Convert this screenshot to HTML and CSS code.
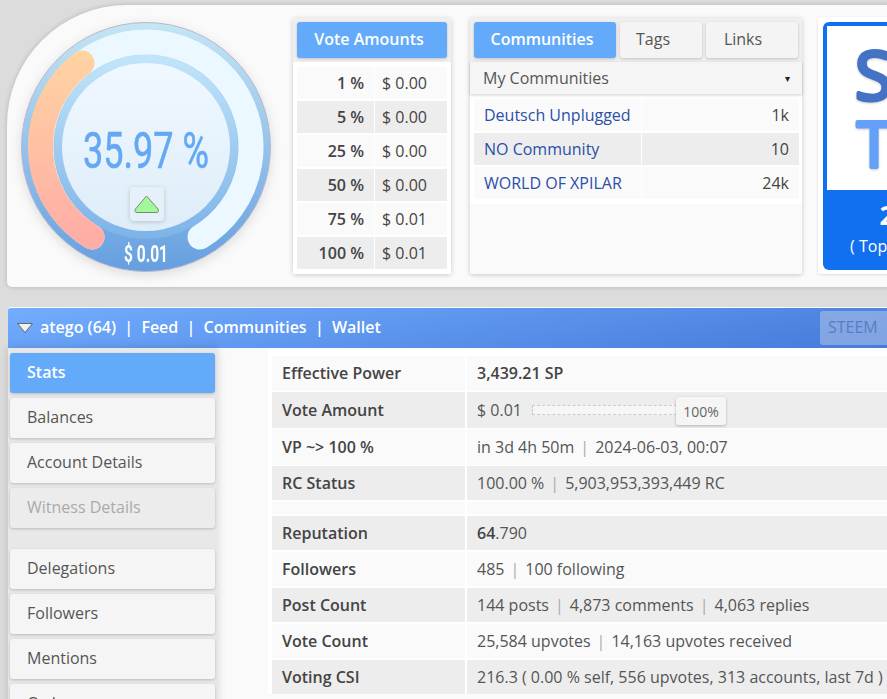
FILE: index.html
```html
<!DOCTYPE html>
<html lang="en">
<head>
<meta charset="utf-8">
<title>Account stats</title>
<link rel="stylesheet" href="styles.css">
</head>
<body>
<div class="page">
  <section class="top">
    <div class="gauge">
      <svg width="250" height="250" viewBox="0 0 250 250">
        <defs>
          <linearGradient id="ring" x1="0" y1="0" x2="0" y2="1">
            <stop offset="0" stop-color="#c4e6f4"/>
            <stop offset="1" stop-color="#659fe0"/>
          </linearGradient>
          <linearGradient id="ring2" x1="0" y1="0" x2="0" y2="1">
            <stop offset="0" stop-color="#c2e5fa"/>
            <stop offset="1" stop-color="#7db3e8"/>
          </linearGradient>
          <linearGradient id="inner" x1="0" y1="0" x2="0" y2="1">
            <stop offset="0" stop-color="#f0f8ff"/>
            <stop offset="1" stop-color="#deedf9"/>
          </linearGradient>
          <linearGradient id="mana" gradientUnits="userSpaceOnUse" x1="0" y1="28" x2="0" y2="228">
            <stop offset="0" stop-color="#ffd4a2"/>
            <stop offset="1" stop-color="#ffaba6"/>
          </linearGradient>
        </defs>
        <circle cx="125" cy="125" r="124.5" fill="url(#ring)" stroke="#b9b6cc" stroke-width="1"/>
        <path class="track" d="M71 215 A105 105 0 1 1 179 215"/>
        <path class="mana" d="M61 41 A105 105 0 0 0 71 215"/>
        <circle cx="125" cy="125" r="92" fill="url(#ring2)"/>
        <circle cx="125" cy="125" r="84" fill="url(#inner)"/>
        <text class="pct" x="62" y="146" textLength="126" lengthAdjust="spacingAndGlyphs">35.97 %</text>
        <text class="usd" x="103" y="240" textLength="44" lengthAdjust="spacingAndGlyphs">$ 0.01</text>
        <rect class="arrow-box" x="109" y="165" width="34" height="34" rx="4"/>
        <path class="arrow" d="M125.5 174 L137 187 Q138.500 190.500 135 190.500 L116 190.500 Q113 190.500 114.500 187 Z"/>
      </svg>
    </div>

    <div class="card votes">
      <div class="card-head"><span class="tab tab-on tab-wide">Vote Amounts</span></div>
      <div class="card-body">
        <div class="vote-grid">
          <div class="vc vr b">1 %</div><div class="vc">$ 0.00</div>
          <div class="vc vr b alt">5 %</div><div class="vc alt">$ 0.00</div>
          <div class="vc vr b">25 %</div><div class="vc">$ 0.00</div>
          <div class="vc vr b alt">50 %</div><div class="vc alt">$ 0.00</div>
          <div class="vc vr b">75 %</div><div class="vc">$ 0.01</div>
          <div class="vc vr b alt">100 %</div><div class="vc alt">$ 0.01</div>
        </div>
      </div>
    </div>

    <div class="card comm">
      <div class="card-head tabs">
        <span class="tab tab-on t-comm">Communities</span>
        <span class="tab t-tags">Tags</span>
        <span class="tab t-links">Links</span>
      </div>
      <div class="select"><span>My Communities</span><span class="caret">▾</span></div>
      <div class="comm-body">
        <div class="comm-grid">
          <div class="vc link">Deutsch Unplugged</div><div class="vc right">1k</div>
          <div class="vc link alt">NO Community</div><div class="vc right alt">10</div>
          <div class="vc link">WORLD OF XPILAR</div><div class="vc right">24k</div>
        </div>
      </div>
    </div>

    <div class="rank">
      <div class="rank-in">
        <div class="rank-logo">
          <svg width="132" height="164" viewBox="0 0 132 164">
            <text class="l-s" x="28" y="74">S</text>
            <text class="l-t" x="30" y="141">T</text>
          </svg>
        </div>
        <div class="rank-foot">
          <div class="rank-num">23</div>
          <div class="rank-sub">( Top 10 % )</div>
        </div>
      </div>
    </div>
  </section>

  <section class="account">
    <header class="bar">
      <svg class="tri" width="16" height="10" viewBox="0 0 16 10"><path d="M.5 .5 H15.500 L8 9.500 Z"/></svg>
      <nav class="bar-nav"><b>atego (64)</b><i>|</i><b>Feed</b><i>|</i><b>Communities</b><i>|</i><b>Wallet</b></nav>
      <span class="steem">STEEM</span>
    </header>
    <div class="body">
      <aside class="side">
        <a class="nav on">Stats</a>
        <a class="nav">Balances</a>
        <a class="nav">Account Details</a>
        <a class="nav off">Witness Details</a>
        <a class="nav gap">Delegations</a>
        <a class="nav">Followers</a>
        <a class="nav">Mentions</a>
        <a class="nav">Orders</a>
      </aside>
      <main class="main">
        <div class="stats">
          <div class="row h35"><div class="k">Effective Power</div><div class="v"><strong>3,439.21 SP</strong></div></div>
          <div class="row h36 alt"><div class="k">Vote Amount</div><div class="v">$ 0.01<span class="meter"><span class="meter-tip">100%</span></span></div></div>
          <div class="row h36"><div class="k">VP ~&gt; 100 %</div><div class="v">in 3d 4h 50m<i>|</i>2024-06-03, 00:07</div></div>
          <div class="row alt"><div class="k">RC Status</div><div class="v">100.00 %<i>|</i>5,903,953,393,449 RC</div></div>
          <div class="row spacer"><div class="k"></div><div class="v"></div></div>
          <div class="row alt"><div class="k">Reputation</div><div class="v"><strong>64</strong>.790</div></div>
          <div class="row"><div class="k">Followers</div><div class="v">485<i>|</i>100 following</div></div>
          <div class="row alt"><div class="k">Post Count</div><div class="v">144 posts<i>|</i>4,873 comments<i>|</i>4,063 replies</div></div>
          <div class="row"><div class="k">Vote Count</div><div class="v">25,584 upvotes<i>|</i>14,163 upvotes received</div></div>
          <div class="row alt"><div class="k">Voting CSI</div><div class="v">216.3 ( 0.00 % self, 556 upvotes, 313 accounts, last 7d )</div></div>
        </div>
      </main>
    </div>
  </section>
</div>
</body>
</html>
```
FILE: styles.css
```css
* { box-sizing: border-box; }
html, body { margin: 0; height: 100%; overflow: hidden; }
body { background: #dcdcdc; font-family: "Open Sans", "Liberation Sans", sans-serif; font-size: 16px; color: #444; }
.page { width: 1200px; padding: 5px 0 0 7px; }

.top { display: flex; align-items: flex-start; height: 282px; padding: 13px 0 0 14px; background: #fafafa; border-radius: 120px 0 0 5px; box-shadow: 0 0 5px rgba(0,0,0,.18); }
.gauge { width: 250px; height: 250px; margin-top: 4px; filter: drop-shadow(0 3px 6px rgba(0,0,0,.12)); }
.gauge svg { display: block; }
.track, .mana { fill: none; stroke-width: 25; stroke-linecap: round; }
.track { stroke: #ecf8ff; }
.mana { stroke: url(#mana); }
.pct { font-family: "Roboto", sans-serif; font-weight: 400; font-size: 50px; fill: #64a8f4; stroke: #64a8f4; stroke-width: .6; }
.usd { font-family: "Roboto", sans-serif; font-weight: 700; font-size: 24px; fill: #fff; }
.arrow-box { fill: #e6f0f8; filter: drop-shadow(0 1px 2px rgba(0,0,0,.18)); }
.arrow { fill: #a4f79a; stroke: #6f8f6f; stroke-width: 1; stroke-linejoin: round; }

.card { height: 256px; background: #fafafa; box-shadow: 0 1px 5px rgba(0,0,0,.2); border-radius: 2px; }
.votes { width: 158px; margin-left: 22px; }
.comm { width: 332px; margin-left: 19px; }
.card-head { height: 44px; padding: 4px; background: #efefef; display: flex; gap: 4px; }
.tab { display: flex; align-items: center; justify-content: center; height: 36px; padding-bottom: 2px; border-radius: 3px; background: #f4f4f4; box-shadow: 0 1px 3px rgba(0,0,0,.2); color: #555; }
.tab-on { background: #64aafa; color: #fff; font-weight: 600; padding-right: 6px; }
.tab-wide { width: 150px; }
.t-comm { width: 142px; }
.t-tags { width: 82px; padding-right: 16px; }
.t-links { width: 92px; padding-right: 18px; }
.card-body { height: 212px; padding: 5px 4px; background: #fff; }
.vote-grid { display: grid; grid-template-columns: 77px 72px; grid-auto-rows: 32px; gap: 2px 1px; }
.vc { display: flex; align-items: center; padding: 0 7px; background: #fafafa; color: #444; }
.alt { background: #ededed; }
.vr { justify-content: flex-end; padding-right: 10px; }
.b { font-weight: 600; }
.select { display: flex; justify-content: space-between; align-items: center; height: 32px; padding: 0 12px 0 13px; background: #f5f5f5; box-shadow: 0 1px 3px rgba(0,0,0,.2); position: relative; color: #555; }
.caret { font-size: 10px; color: #222; }
.comm-body { height: 110px; padding: 5px 4px 4px; background: #fff; }
.comm-grid { display: grid; grid-template-columns: 167px 157px; grid-auto-rows: 32px; gap: 2px 1px; }
.link { color: #2a4fa8; padding-left: 10px; }
.right { justify-content: flex-end; padding-right: 10px; }

.rank { width: 150px; height: 257px; margin: -1px 0 0 16px; padding: 5px; background: #fff; border-radius: 3px; box-shadow: 0 1px 3px rgba(0,0,0,.12); }
.rank-in { height: 248px; background: #1170ef; border-radius: 6px; padding: 4px 4px 0; display: flex; flex-direction: column; }
.rank-logo { height: 164px; background: #fff; }
.rank-logo svg { display: block; }
.l-s, .l-t { font-family: "Open Sans", sans-serif; font-weight: 400; stroke-width: 4; stroke-linejoin: round; paint-order: stroke; filter: drop-shadow(0 1px 1px rgba(0,0,0,.2)); }
.l-s { font-size: 68px; fill: #4472c4; stroke: #4472c4; }
.l-t { font-size: 62px; fill: #64a0f8; stroke: #64a0f8; }
.rank-foot { flex: 1; color: #fff; text-align: center; }
.rank-num { font-size: 27px; font-weight: 700; line-height: 30px; margin-top: 10px; padding-left: 4px; }
.rank-sub { font-size: 16px; line-height: 24px; margin-top: 4px; }

.account { margin: 20px 0 0 1px; }
.bar { display: flex; align-items: center; height: 41px; padding: 0 0 0 9px; background: linear-gradient(170deg, #72adff 0%, #4f86e2 60%, #3a70d2 100%); border-top: 1px solid #fff; border-radius: 3px 0 0 0; color: #fff; }
.tri { margin-right: 7px; flex: none; }
.tri path { fill: #f0f0f0; stroke: #666; stroke-width: 1; stroke-linejoin: round; }
.bar-nav { display: flex; align-items: center; flex: 0 0 780px; padding-bottom: 2px; font-weight: 600; }
.bar-nav b { font-weight: 600; }
.bar-nav i { font-style: normal; font-weight: 600; margin: 0 8.250px; }
.steem { width: 90px; height: 34px; padding-left: 8px; line-height: 32px; background: rgba(235,235,235,.35); border-radius: 3px; color: #5a7cc2; }
.body { display: flex; height: 360px; }
.side { width: 210px; padding: 5px 3px 0 2px; background: #e8e8e8; display: flex; flex-direction: column; gap: 5px; box-shadow: 0 0 8px rgba(0,0,0,.14); position: relative; flex: none; }
.nav { display: flex; align-items: center; flex: none; height: 40px; padding: 0 0 2px 17px; border-radius: 3px; background: #f5f5f5; box-shadow: 0 1px 3px rgba(0,0,0,.2); color: #555; }
.nav.on { background: #64aafa; color: #fff; font-weight: 600; }
.nav.off { background: #ececec; color: #aaa; }
.nav.gap { margin-top: 16px; }
.main { flex: 1; padding: 0 0 0 50px; background: #fafafa; }
.stats { background: #fff; padding: 8px 0 0 4px; }
.row { display: grid; grid-template-columns: 193px 1fr; column-gap: 2px; height: 34px; margin-bottom: 2px; background: #fff; }
.row.h35 { height: 35px; margin-bottom: 1px; }
.row.h35 .k, .row.h35 .v { padding-bottom: 1px; }
.row.h36 { height: 36px; margin-bottom: 1px; }
.row.spacer { height: 12px; margin-bottom: 2px; }
.k { display: flex; align-items: center; padding-left: 10px; background: #fafafa; font-weight: 600; color: #444; }
.v { display: flex; align-items: center; padding-left: 10px; background: #fafafa; color: #555; white-space: pre; }
.v strong { font-weight: 600; color: #444; }
.v i { font-style: normal; color: #aaa; margin: 0 6px; }
.row.alt .k, .row.alt .v { background: #ededed; }
.meter { position: relative; display: block; width: 145px; height: 10px; margin-left: 10px; background: #f6f6f6; border: 1px dashed #ccc; }
.meter-tip { position: absolute; right: -50px; top: -9px; width: 50px; height: 28px; display: flex; align-items: center; justify-content: center; font-size: 14px; background: #f5f5f5; border-radius: 3px; box-shadow: 0 1px 3px rgba(0,0,0,.25); color: #666; }
```
